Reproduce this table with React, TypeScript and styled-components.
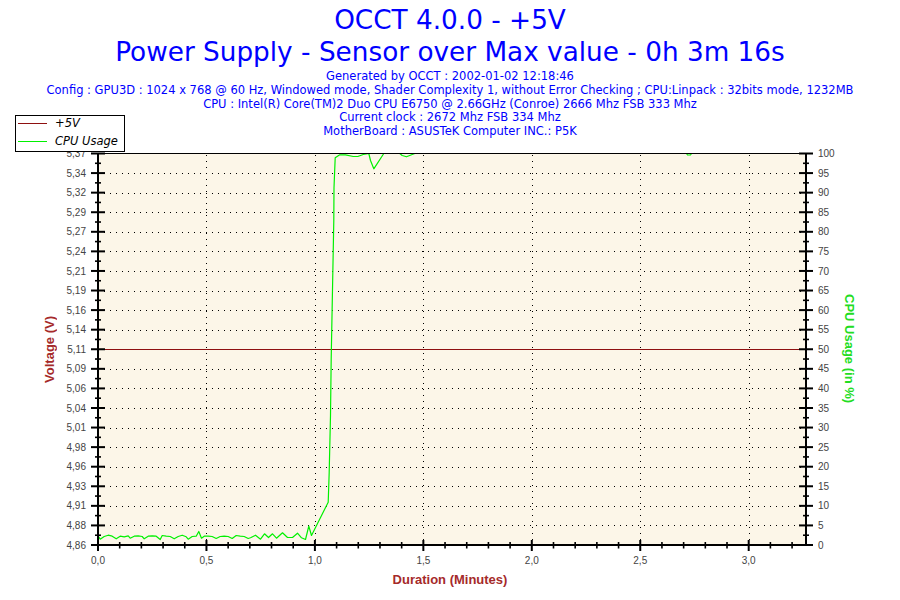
import React from "react";
import styled, { createGlobalStyle } from "styled-components";

const GlobalStyle = createGlobalStyle`
  html, body { margin: 0; padding: 0; background: #ffffff; }
  body { width: 900px; height: 600px; overflow: hidden; }
`;

const Page = styled.div`
  position: relative;
  width: 900px;
  height: 600px;
  background: #ffffff;
  font-family: "DejaVu Sans", Verdana, sans-serif;
`;

const Header = styled.header`
  height: 140px;
  padding-top: 4px;
  box-sizing: border-box;
  text-align: center;
  color: #0000ff;
`;

const Title = styled.div`
  font-size: 26.3px;
  line-height: 32px;
  white-space: nowrap;
`;

const InfoBlock = styled.div`
  margin-top: 2px;
  font-size: 11.5px;
  line-height: 13.8px;
`;

const InfoLine = styled.div`
  white-space: nowrap;
`;

const ChartGrid = styled.div`
  display: grid;
  grid-template-columns: 41px 18px 781px 18px 1fr;
  grid-template-rows: 430px 30px;
`;

const AxisTitle = styled.div<{ $color: string; $col: number; $up?: boolean }>`
  grid-row: 1;
  grid-column: ${(p) => p.$col};
  align-self: center;
  justify-self: center;
  margin-bottom: 12px;
  writing-mode: vertical-rl;
  transform: ${(p) => (p.$up ? "rotate(180deg)" : "none")};
  font: bold 13px/16px "Liberation Sans", Arial, sans-serif;
  color: ${(p) => p.$color};
  white-space: nowrap;
`;

const PlotSvg = styled.svg`
  grid-row: 1;
  grid-column: 3;
  display: block;
`;

const XTitle = styled.div`
  grid-row: 2;
  grid-column: 1 / -1;
  padding-top: 2px;
  text-align: center;
  font: bold 13px/16px "Liberation Sans", Arial, sans-serif;
  color: #a52a2a;
`;

const Legend = styled.div`
  position: absolute;
  left: 15px;
  top: 115px;
  width: 110px;
  height: 37px;
  box-sizing: border-box;
  border: 1px solid #000;
  background: #fff;
  display: flex;
  flex-direction: column;
  gap: 4px;
`;

const LegendRow = styled.div`
  display: flex;
  align-items: center;
  height: 14px;
  gap: 8px;
  padding-left: 2px;
`;

const Swatch = styled.span<{ $color: string }>`
  width: 29px;
  height: 1px;
  background: ${(p) => p.$color};
`;

const LegendLabel = styled.span`
  font-family: "DejaVu Sans", Verdana, sans-serif;
  font-style: italic;
  font-size: 11.5px;
  color: #000;
  white-space: nowrap;
`;

const OX = 59;
const OY = 140;
const sx = (x: number) => x - OX;
const sy = (y: number) => y - OY;

const X0 = 98;
const PX_HALF = 108.45;
const YB = 545;
const YT = 153.5;
const STEP = (YB - YT) / 20;

const leftLabels = [
  "4,86", "4,88", "4,91", "4,93", "4,96", "4,98", "5,01", "5,04", "5,06", "5,09",
  "5,11", "5,14", "5,16", "5,19", "5,21", "5,24", "5,27", "5,29", "5,32", "5,34", "5,37",
];

const RED = "#8e1010";
const GREEN = "#00f000";

// pixel-index coordinates of the CPU usage trace (absolute page coords)
const cpuTrace: [number, number][] = [
  [97.7, 535.7], [99.7, 538.7], [103.7, 536], [107.7, 534.7], [111.7, 535.7], [115.7, 538.3],
  [119.7, 535.7], [123.7, 536.3], [127.7, 535.3], [129.7, 537.7], [133.7, 535.7], [137.7, 535.3],
  [141.7, 536], [143.7, 538.3], [147.7, 535.7], [151.7, 535.3], [155.7, 535.7], [159.7, 539],
  [161.7, 535], [165.7, 535.7], [169.7, 536], [173.7, 538.3], [177.7, 536], [181.7, 534.7],
  [185.7, 536.3], [187.7, 538.7], [191.7, 536], [195.7, 535.7], [198.3, 531], [201, 537.7],
  [203.7, 535.7], [207.7, 535.7], [211.7, 536], [215.7, 538], [219.7, 536], [223.7, 535.7],
  [227.7, 536], [231.7, 538], [235.7, 535], [239.7, 535.7], [243.7, 536], [247.7, 538],
  [250, 537.3], [255, 534.7], [260, 538.7], [264, 533.3], [268, 537], [272, 533.3],
  [276, 537.7], [282, 532.3], [287, 537], [292, 537], [297, 532.7], [301, 537.3], [305, 539],
  [308.3, 525.7], [311, 535], [327.7, 501.7], [328.7, 471.7], [330, 415], [330.7, 358],
  [333.3, 220], [333.5, 187.3], [334.7, 157.3], [339.3, 154.3], [345, 154.3], [352.7, 156],
  [357.3, 156], [362.7, 154], [368.3, 153], [370, 160], [373.3, 168.3], [383.3, 153],
  [399.3, 153], [401.7, 155], [406, 156.3], [411.7, 154], [414.3, 153], [686, 153],
  [687, 154.5], [690, 154.5], [691, 153], [806, 153],
];

function Chart() {
  const yMajor = Array.from({ length: 21 }, (_, i) => YB - i * STEP);
  const yMinor = Array.from({ length: 20 }, (_, i) => YB - (i + 0.5) * STEP);
  const xMajor = Array.from({ length: 7 }, (_, k) => X0 + k * PX_HALF);
  const xMinor = Array.from({ length: 32 }, (_, j) => X0 + (j + 1) * (PX_HALF / 5)).filter(
    (_, j) => (j + 1) % 5 !== 0
  );
  const tickFont = { fontFamily: '"Liberation Sans", Arial, sans-serif', fontSize: 10, fill: "#444" };
  const pts = cpuTrace.map(([x, y]) => `${sx(x + 0.5).toFixed(2)},${sy(y + 0.5).toFixed(2)}`).join(" ");

  return (
    <PlotSvg width={781} height={430} viewBox="0 0 781 430">
      <rect x={sx(98)} y={sy(153)} width={708} height={392} fill="#fcf6e8" />
      {yMajor.slice(1, 20).map((y, i) => (
        <line
          key={`hg${i}`}
          x1={sx(98)}
          x2={sx(805)}
          y1={sy(Math.round(y) + 0.5)}
          y2={sy(Math.round(y) + 0.5)}
          stroke="#000"
          strokeWidth={1}
          strokeDasharray="1 5"
        />
      ))}
      {xMajor.slice(1).map((x, i) => (
        <line
          key={`vg${i}`}
          x1={sx(Math.round(x) + 0.5)}
          x2={sx(Math.round(x) + 0.5)}
          y1={sy(155)}
          y2={sy(544)}
          stroke="#000"
          strokeWidth={1}
          strokeDasharray="1 5"
        />
      ))}
      <line x1={sx(98)} x2={sx(806)} y1={sy(349.5)} y2={sy(349.5)} stroke={RED} strokeWidth={1} />
      <polyline points={pts} fill="none" stroke={GREEN} strokeWidth={1.2} strokeLinejoin="round" />

      {/* frame */}
      <line x1={sx(97)} x2={sx(807)} y1={sy(153.5)} y2={sy(153.5)} stroke="#000" strokeWidth={1} />
      <line x1={sx(98)} x2={sx(98)} y1={sy(153)} y2={sy(546)} stroke="#000" strokeWidth={2} />
      <line x1={sx(806)} x2={sx(806)} y1={sy(153)} y2={sy(546)} stroke="#000" strokeWidth={2} />
      <line x1={sx(97)} x2={sx(807)} y1={sy(545)} y2={sy(545)} stroke="#000" strokeWidth={2} />

      {/* y ticks */}
      {yMajor.map((y, i) => (
        <g key={`ym${i}`}>
          <line x1={sx(91)} x2={sx(105)} y1={sy(y)} y2={sy(y)} stroke="#000" strokeWidth={2} />
          <line x1={sx(799)} x2={sx(813)} y1={sy(y)} y2={sy(y)} stroke="#000" strokeWidth={2} />
          <text x={sx(86)} y={sy(y + 3.6)} textAnchor="end" {...tickFont}>
            {leftLabels[i]}
          </text>
          <text x={sx(818)} y={sy(y + 3.6)} textAnchor="start" {...tickFont}>
            {i * 5}
          </text>
        </g>
      ))}
      {yMinor.map((y, i) => (
        <g key={`yn${i}`}>
          <line x1={sx(95)} x2={sx(101)} y1={sy(y)} y2={sy(y)} stroke="#000" strokeWidth={1.6} />
          <line x1={sx(803)} x2={sx(809)} y1={sy(y)} y2={sy(y)} stroke="#000" strokeWidth={1.6} />
        </g>
      ))}

      {/* x ticks */}
      {xMajor.map((x, k) => (
        <g key={`xm${k}`}>
          <line x1={sx(x)} x2={sx(x)} y1={sy(k === 0 ? 545 : 540)} y2={sy(551)} stroke="#000" strokeWidth={2} />
          <text x={sx(x)} y={sy(564)} textAnchor="middle" {...tickFont}>
            {(k * 0.5).toFixed(1).replace(".", ",")}
          </text>
        </g>
      ))}
      {xMinor.map((x, j) => (
        <line key={`xn${j}`} x1={sx(x)} x2={sx(x)} y1={sy(542)} y2={sy(548.5)} stroke="#000" strokeWidth={1.6} />
      ))}
    </PlotSvg>
  );
}

export default function App() {
  return (
    <Page>
      <GlobalStyle />
      <Header>
        <Title>OCCT 4.0.0 - +5V</Title>
        <Title>Power Supply - Sensor over Max value - 0h 3m 16s</Title>
        <InfoBlock>
          <InfoLine>Generated by OCCT : 2002-01-02 12:18:46</InfoLine>
          <InfoLine>
            Config : GPU3D : 1024 x 768 @ 60 Hz, Windowed mode, Shader Complexity 1, without Error Checking ; CPU:Linpack : 32bits mode, 1232MB
          </InfoLine>
          <InfoLine>CPU : Intel(R) Core(TM)2 Duo CPU E6750 @ 2.66GHz (Conroe) 2666 Mhz FSB 333 Mhz</InfoLine>
          <InfoLine>Current clock : 2672 Mhz FSB 334 Mhz</InfoLine>
          <InfoLine>MotherBoard : ASUSTeK Computer INC.: P5K</InfoLine>
        </InfoBlock>
      </Header>
      <ChartGrid>
        <AxisTitle $col={2} $color="#a52a2a" $up>
          Voltage (V)
        </AxisTitle>
        <Chart />
        <AxisTitle $col={4} $color="#22dd22">
          CPU Usage (in %)
        </AxisTitle>
        <XTitle>Duration (Minutes)</XTitle>
      </ChartGrid>
      <Legend>
        <LegendRow>
          <Swatch $color={RED} />
          <LegendLabel>+5V</LegendLabel>
        </LegendRow>
        <LegendRow>
          <Swatch $color={GREEN} />
          <LegendLabel>CPU Usage</LegendLabel>
        </LegendRow>
      </Legend>
    </Page>
  );
}
